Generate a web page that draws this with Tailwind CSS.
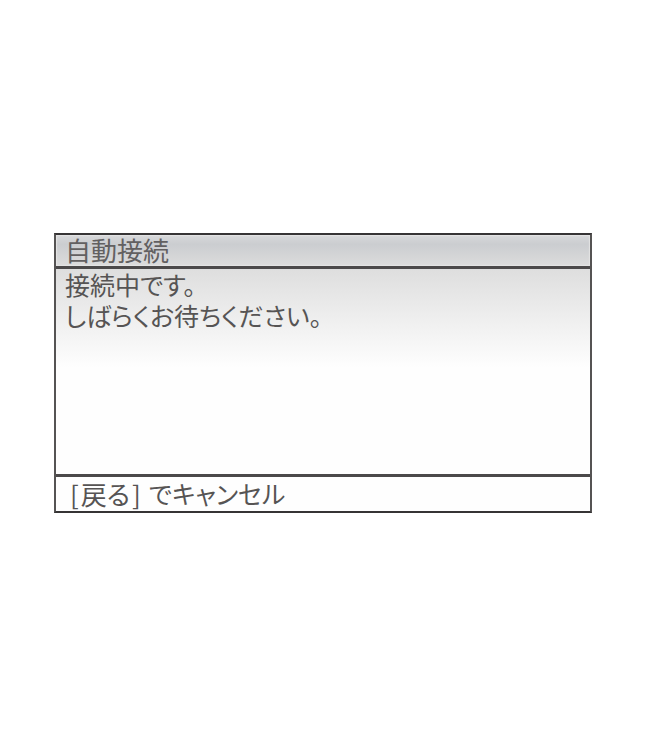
<!DOCTYPE html>
<html lang="ja">
<head>
<meta charset="utf-8">
<meta name="viewport" content="width=device-width, initial-scale=1">
<title>自動接続</title>
<script src="https://cdn.jsdelivr.net/npm/@tailwindcss/browser@4"></script>
</head>
<body class="flex min-h-screen items-center justify-center bg-white pt-0.5 pr-14 pl-[54px] font-['Noto_Sans_CJK_JP',sans-serif] font-normal text-[25px] leading-[31px] text-[#565454] [font-feature-settings:'palt']">
  <main class="flex w-full flex-col border-2 border-x-[#555353] border-y-[#363435] bg-[#fefefe]">
    <header class="border-b-3 border-[#4b494a] bg-linear-to-b from-[#d7d8da] via-[#cbcdd0] via-30% to-[#dcdcdc] px-[9px] text-[26px] text-[#626061] inset-shadow-[0_0_1px_1px_#e4e4e4]">
      <h1 class="h-[31px] leading-[30px]">自動接続</h1>
    </header>
    <section class="min-h-[205px] bg-linear-to-b from-[#dedede] via-[#efefef] via-25% to-[#fefefe] to-48% px-[9px]">
      <p>接続中です。<br>しばらくお待ちください。</p>
    </section>
    <footer class="border-t-3 border-[#4b494a] px-[14px]">
      <p class="flex h-[34px] gap-2 leading-[33px]"><span class="flex gap-0.5 text-[26px]"><span>[</span><span>戻る</span><span>]</span></span><span>でキャンセル</span></p>
    </footer>
  </main>
</body>
</html>
